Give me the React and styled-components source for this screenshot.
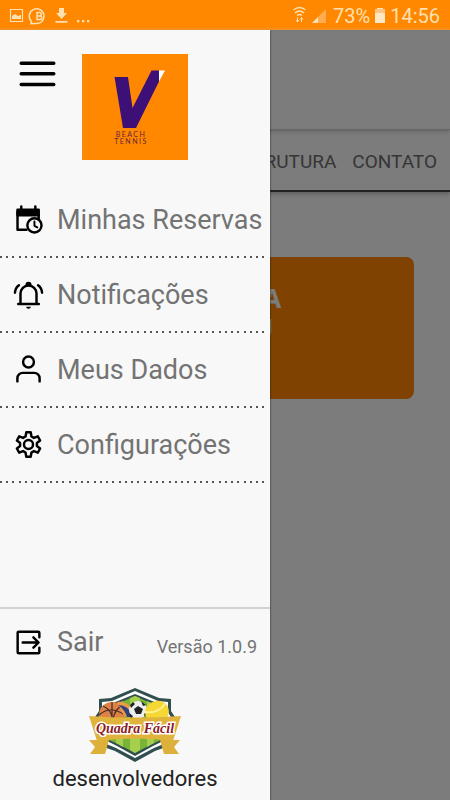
import React from "react";
import styled, { createGlobalStyle } from "styled-components";

const GlobalStyle = createGlobalStyle`
  *, *::before, *::after { box-sizing: border-box; }
  body { margin: 0; font-family: Roboto, sans-serif; background: #f8f8f8; }
  button, a { font: inherit; color: inherit; }
`;

const Screen = styled.div`
  display: grid;
  grid-template-rows: 30px 1fr;
  min-height: 100vh;
`;

const StatusBar = styled.div`
  display: flex;
  align-items: center;
  justify-content: space-between;
  padding: 2px 10px 0 9px;
  background: #ff8800;
  color: #ffe0b0;
  font-size: 20px;
  line-height: 28px;
`;

const StatusGroup = styled.div`
  display: flex;
  align-items: center;
  gap: 5px;
`;

const Stage = styled.div`
  display: grid;
  grid-template-columns: 60% 40%;
`;

const Page = styled.main`
  grid-area: 1 / 1 / 2 / 3;
  background: #f8f8f8;
`;

const PageHeader = styled.header`
  height: 100px;
  border-bottom: 1px solid #d0d0d0;
  box-shadow: 0 1px 4px #bbb;
`;

const TabBar = styled.nav`
  display: flex;
  justify-content: flex-end;
  align-items: center;
  gap: 16px;
  height: 62px;
  padding: 4px 13px 0 0;
  border-bottom: 2px solid #444;
  box-shadow: 0 2px 4px #bbb;
  overflow: hidden;
`;

const Tab = styled.a`
  color: #6c6c6c;
  font-size: 19px;
  line-height: 24px;
  text-decoration: none;
`;

const Card = styled.section`
  min-height: 142px;
  margin: 65px 36px 0;
  padding-top: 26px;
  border-radius: 8px;
  background: #ff8400;
  color: #f8f8f8;
  font: 700 26px/30px "Open Sans", sans-serif;
  text-align: center;
`;

const CardLine = styled.div``;

const Scrim = styled.div`
  grid-area: 1 / 1 / 2 / 3;
  z-index: 1;
  background: rgba(0, 0, 0, 0.5);
`;

const Drawer = styled.aside`
  grid-area: 1 / 1 / 2 / 2;
  z-index: 2;
  display: flex;
  flex-direction: column;
  background: #f8f8f8;
  color: #737373;
  box-shadow: 0 0 2px #222;
  clip-path: inset(0 -4px 0 0);
`;

const DrawerHeader = styled.header`
  display: flex;
  align-items: flex-start;
  gap: 26px;
  height: 153px;
  padding: 24px 0 0 19px;
`;

const MenuButton = styled.button`
  display: flex;
  margin-top: 6px;
  padding: 0;
  border: 0;
  background: none;
`;

const List = styled.ul`
  margin: 0;
  padding: 0;
  list-style: none;
`;

const Item = styled.li`
  height: 75px;
  padding-right: 4px;
  background:
    linear-gradient(90deg,
      #555 0 2px, transparent 2px 6px,
      #555 6px 8px, transparent 8px 12px,
      #555 12px 14px, transparent 14px 19px,
      #555 19px 21px, transparent 21px 25px)
    0 100% / 25px 2px repeat-x content-box;
`;

const RowButton = styled.button`
  display: flex;
  align-items: center;
  gap: 13px;
  height: ${(p) => p.$height}px;
  padding: 0 0 0 13px;
  border: 0;
  background: none;
  font-size: 27px;
  line-height: 32px;
  white-space: nowrap;
  svg { color: #000; flex: none; }
`;

const Footer = styled.footer`
  margin-top: auto;
  border-top: 2px solid #d2d2d2;
  padding-bottom: 9px;
`;

const FooterRow = styled.div`
  display: flex;
  align-items: center;
  justify-content: space-between;
  padding-right: 13px;
`;

const Version = styled.span`
  padding-top: 9px;
  font-size: 18px;
  line-height: 24px;
`;

const Developers = styled.div`
  display: flex;
  flex-direction: column;
  align-items: center;
  gap: 4px;
  padding-top: 12px;
  color: #222;
  font-size: 22px;
  line-height: 24px;
`;

const Icon = ({ children }) => (
  <svg width="31" height="31" viewBox="0 0 24 24" fill="none" stroke="currentColor" strokeWidth="1.9" strokeLinecap="round" strokeLinejoin="round" aria-hidden="true">
    {children}
  </svg>
);

const CalendarIcon = () => (
  <Icon>
    <path d="M3.500 4.500h16.400v4.200H3.500z" fill="currentColor" />
    <path d="M6.400 2v3M17.300 2v3M3.500 6v14h7M19.900 8v4" />
    <circle cx="16.600" cy="16.500" r="5.500" fill="#f8f8f8" />
    <path d="M16.600 13.600v3.300l2.200 1.200" strokeWidth="1.500" />
  </Icon>
);

const BellIcon = () => (
  <Icon>
    <path d="M5.800 19v-7.800a6.200 6.200 0 0 1 12.400 0V19M4 19.400h16" />
    <path d="M10.600 4.500a1.400 1.400 0 0 1 2.800 0z" fill="currentColor" />
    <path d="M10.200 21.500a1.800 1.600 0 0 0 3.600 0z" fill="currentColor" stroke="none" />
    <path d="M4.600 4.800Q1.800 6.800 1.500 10.600M19.400 4.800q2.800 2 3.100 5.800" />
  </Icon>
);

const UserIcon = () => (
  <Icon>
    <circle cx="12" cy="6.200" r="4.200" />
    <path d="M3.400 21.200v-2.400a4.200 4.200 0 0 1 4.200-4.200h8.800a4.200 4.200 0 0 1 4.200 4.200v2.400" />
  </Icon>
);

const GearIcon = () => (
  <Icon>
    <circle cx="12" cy="12" r="3.500" />
    <path d="M10.300 2.500h3.400l.6 3.300 1.900 1.100 3-1.200 1.800 3.200-2.500 1.900v2.400l2.500 1.900-1.800 3.200-3-1.200-1.900 1.100-.6 3.300h-3.400l-.6-3.300-1.900-1.100-3 1.200L3 15.100l2.500-1.900v-2.400L3 8.900l1.800-3.200 3 1.200 1.900-1.100z" />
  </Icon>
);

const ExitIcon = () => (
  <Icon>
    <path d="M20.400 8V4.500a.9.9 0 0 0-.9-.9h-15a.9.9 0 0 0-.9.9v15c0 .5.4.9.9.9h15c.5 0 .9-.4.9-.9V16" />
    <path d="M7.500 12h12M15.800 8l4 4-4 4" />
  </Icon>
);

const MenuIcon = () => (
  <svg width="37" height="28" viewBox="0 0 37 28" stroke="#000" strokeWidth="3.400" strokeLinecap="round" aria-hidden="true">
    <path d="M2.200 3.200h32.600M2.200 13.800h32.600M2.200 24.500h32.600" />
  </svg>
);

const ClubLogo = () => (
  <svg width="106" height="106" viewBox="0 0 106 106" role="img" aria-label="V Beach Tennis">
    <path fill="#ff8800" d="M0 0h106v106H0z" />
    <path fill="#3d1078" d="M32.500 23H46l4.500 31L69.500 16.500H77v11L54 74H41z" />
    <path fill="#fff" d="M77 16.500h6L77 27.500z" />
    <g fill="#6a2638" fontFamily="Lato, sans-serif" fontSize="7" textAnchor="middle">
      <text x="49" y="83" letterSpacing="1.500">BEACH</text>
      <text x="49" y="89.500" letterSpacing="1.500">TENNIS</text>
    </g>
  </svg>
);

const QuadraLogo = () => (
  <svg width="92" height="76" viewBox="0 0 92 76" role="img" aria-label="Quadra Fácil">
    <path d="M22 11 46 1l24 10 12 1v12l6 9-8 26-14 5-20 11-20-11-14-5-8-26 6-9V12z" fill="#314f50" />
    <path d="M23 14 46 4l23 10 10 1v10l5 9-7 22-12 5-19 10-19-10-12-5-7-22 5-9V15z" fill="#fff" />
    <path d="M24 16 46 7l22 9 8 1v10l5 8-7 19-10 5-18 10-18-10-10-5-7-19 5-8V17z" fill="#314f50" />
    <path d="m46 9 20 9 7 1v9l4 8-5 17-9 4-17 9-17-9-9-4-5-17 4-8v-9l7-1z" fill="#79b437" />
    <path d="M27 17l7-3v46l-7-4zM41 11l5-2 5 2v52l-5 3-5-3zM58 14l7 3v39l-7 4z" fill="#a5cf4c" />
    <circle cx="23" cy="28" r="13" fill="#df8245" />
    <path d="M10 28q11-10 26 0M23 15v25M14 19q12 6 9 20M32 19q-10 7-7 20" fill="none" stroke="#442b2b" strokeWidth="1.200" />
    <path d="M28 15q13-2 18 14H35z" fill="#f09a45" />
    <path d="M29 18q11 0 15 12h-6q-2-7-9-12z" fill="#31427e" />
    <circle cx="49" cy="23" r="9" fill="#eee" />
    <path d="m45 22 4-3 5 3-2 5h-5zM41 18l3-3 2 2-4 4zM52 14l5 4-3 1zM40 26l4 3-2 3zM55 27l3-2-2 5z" fill="#222" />
    <ellipse cx="68" cy="25" rx="12" ry="11" transform="rotate(-20 68 25)" fill="#f5d735" />
    <path d="M56 25q13 2 20-8" fill="none" stroke="#fff38d" strokeWidth="2" />
    <path d="M7 53H0l6 7-5 7h15l4-14zM82 53h9l-6 7 5 7H75l-4-14z" fill="#dcb03a" />
    <path d="M0 29q46 3 92 0l-8 25q-38-5-76 0z" fill="#e0b43c" />
    <text x="46" y="46" textAnchor="middle" fill="#8c1b24" stroke="#fff" strokeWidth="3" paintOrder="stroke" fontFamily="Liberation Serif, serif" fontSize="14" fontWeight="700" fontStyle="italic">Quadra Fácil</text>
  </svg>
);

const NotificationIcons = () => (
  <svg width="82" height="20" viewBox="0 0 82 20" fill="none" stroke="#ffe0b0" aria-hidden="true">
    <path d="M1.500 3.500h12v12h-12z" strokeWidth="1.200" />
    <path d="M3 13v-3l3-2 3 2 3-1v4z" fill="#ffe0b0" stroke="none" />
    <path d="M22.500 15.500a7.400 7.400 0 1 1 4 2l-4.500.3z" strokeWidth="1.500" />
    <path d="M28 6.500h2.500a1.700 1.700 0 0 1 0 3.500H28zM28 10h3a1.700 1.700 0 0 1 0 3.500h-3z" strokeWidth="1.500" />
    <path d="M50 2h5v5h3l-5.500 6L47 7h3zM46.500 15h12v1.700h-12z" fill="#ffe0b0" stroke="none" />
    <path d="M68 14h2.300v2.300H68zM73 14h2.300v2.300H73zM78 14h2.300v2.300H78z" fill="#ffe0b0" stroke="none" />
  </svg>
);

const SignalIcons = () => (
  <svg width="36" height="20" viewBox="0 0 36 20" fill="none" stroke="#ffe0b0" aria-hidden="true">
    <path d="M1.500 4q6-5 12 0M3 7q4.500-4 9 0M5 9.500q2.500-2 5 0" strokeWidth="1.600" />
    <path d="M5.500 11.500V16M4 14l1.500 2L7 14M9.500 16v-4.500M8 13.500l1.500-2 1.500 2" />
    <path d="M34 3v14H20z" fill="#ffad50" stroke="none" />
    <path d="M26 11v6h-6z" fill="#ffe0b0" stroke="none" />
  </svg>
);

const BatteryIcon = () => (
  <svg width="10" height="16" viewBox="0 0 10 16" aria-hidden="true">
    <path d="M2 0h6v1h2v14H0V1h2z" fill="#ffe9c5" />
    <path d="M0 1h10v4H0z" fill="#ffc580" />
  </svg>
);

const items = [
  ["Minhas Reservas", CalendarIcon],
  ["Notificações", BellIcon],
  ["Meus Dados", UserIcon],
  ["Configurações", GearIcon],
];

export default function App() {
  return (
    <Screen>
      <GlobalStyle />
      <StatusBar>
        <NotificationIcons />
        <StatusGroup>
          <SignalIcons />
          <span>73%</span>
          <BatteryIcon />
          <span>14:56</span>
        </StatusGroup>
      </StatusBar>
      <Stage>
        <Page>
          <PageHeader />
          <TabBar>
            <Tab href="#estrutura">ESTRUTURA</Tab>
            <Tab href="#contato">CONTATO</Tab>
          </TabBar>
          <Card>
            <CardLine>RESERVA</CardLine>
            <CardLine>MACAU</CardLine>
          </Card>
        </Page>
        <Scrim />
        <Drawer>
          <DrawerHeader>
            <MenuButton aria-label="Menu"><MenuIcon /></MenuButton>
            <ClubLogo />
          </DrawerHeader>
          <List>
            {items.map(([label, Glyph]) => (
              <Item key={label}>
                <RowButton $height={73}><Glyph />{label}</RowButton>
              </Item>
            ))}
          </List>
          <Footer>
            <FooterRow>
              <RowButton $height={66}><ExitIcon />Sair</RowButton>
              <Version>Versão 1.0.9</Version>
            </FooterRow>
            <Developers>
              <QuadraLogo />
              <span>desenvolvedores</span>
            </Developers>
          </Footer>
        </Drawer>
      </Stage>
    </Screen>
  );
}
